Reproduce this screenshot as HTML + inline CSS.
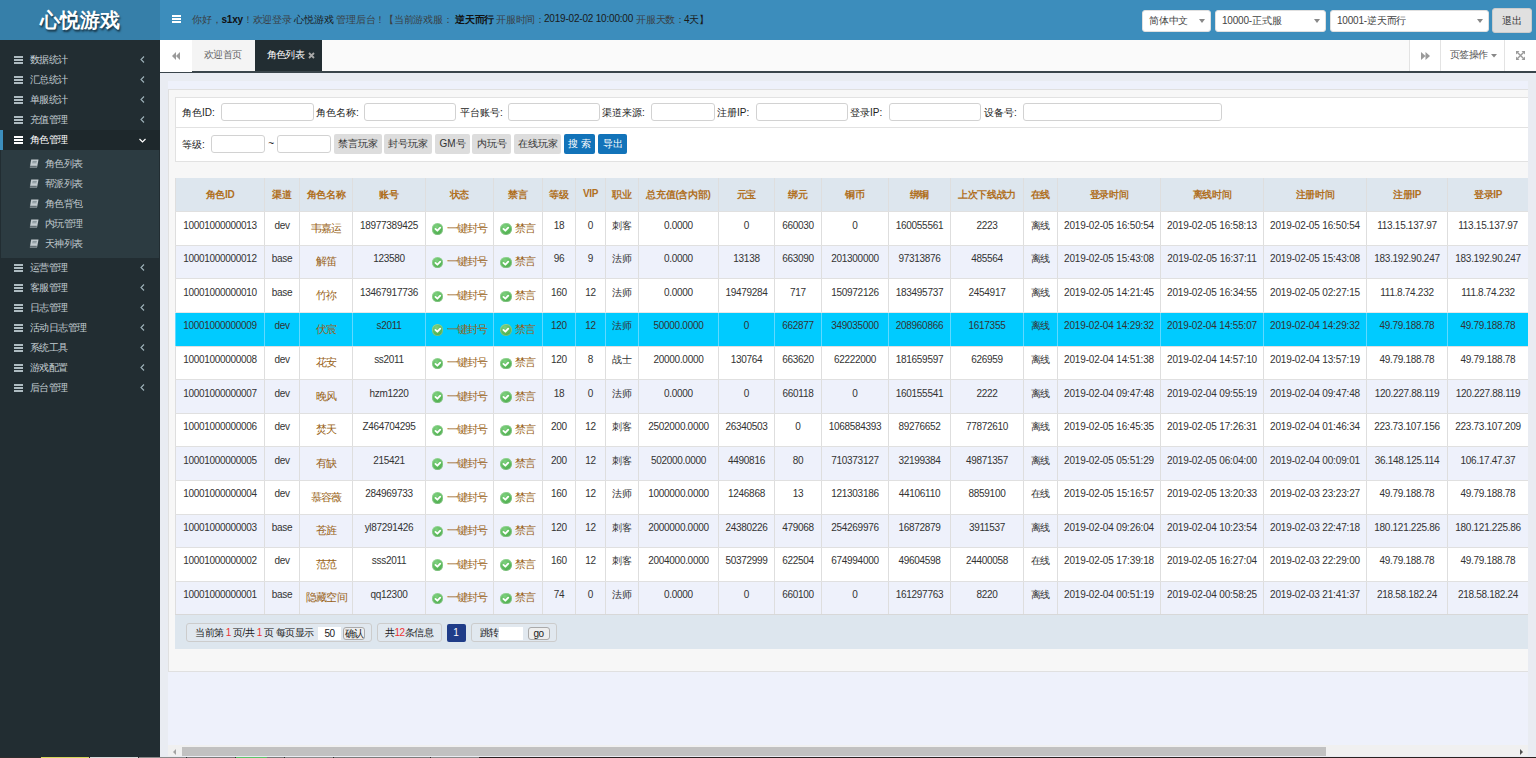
<!DOCTYPE html>
<html><head><meta charset="utf-8"><title>心悦游戏</title>
<style>
*{box-sizing:border-box;margin:0;padding:0}
html,body{width:1536px;height:758px;overflow:hidden;background:#e9ecf2;font-family:"Liberation Sans",sans-serif;font-size:10px;color:#333}
.abs{position:absolute}
#logo{left:0;top:0;width:160px;height:40px;background:#367fa9;color:#fff;font-size:20px;font-weight:bold;text-align:center;line-height:40px;text-shadow:1px 2px 2px rgba(0,0,0,.6)}
#hdr{left:160px;top:0;width:1376px;height:40px;background:#3c8dbc}
#hdr .ham2{position:absolute;left:12px;top:15px;width:9px;height:8px}
#hdr .ham2 b{display:block;height:2px;background:#fff;margin-bottom:1px}
#hdr .msg{position:absolute;left:32px;top:13px;color:#3a3f45;white-space:nowrap;font-size:10px;letter-spacing:-.2px}
#hdr .msg b{color:#111}
.sel{position:absolute;top:10px;height:22px;background:#fff;border-radius:3px;border:1px solid #e0e0e0;color:#444;font-size:10px;letter-spacing:-.2px;line-height:20px;padding-left:6px}
.sel:after{content:"";position:absolute;right:5px;top:8px;border-left:3px solid transparent;border-right:3px solid transparent;border-top:4px solid #888}
#logout{position:absolute;left:1332px;top:8px;width:40px;height:25px;background:#e0e0e0;border-radius:3px;border:1px solid #ccc;text-align:center;line-height:23px;color:#333}
#side{left:0;top:40px;width:160px;height:717px;background:#222d32}
.mi{position:absolute;left:0;width:160px;height:20px;color:#c4ced3;font-size:10.2px;letter-spacing:-.6px;line-height:20px}
.mi.act{background:#1e282c;color:#fff;border-left:3px solid #3c8dbc}
.ham{position:absolute;left:14px;top:6px;width:9px;height:8px}
.ham b{display:block;height:2px;background:#aebbc1;margin-bottom:1px}
.act .ham{left:11px}
.act .ham b{background:#fff}
.mt{position:absolute;left:30px;top:0}
.act .mt{left:27px}
.arr{position:absolute;left:140px;top:6px;width:5px;height:7px}
.act .arr{left:136px;top:8px;width:7px;height:5px}
.subm{position:absolute;left:1px;top:110px;width:158px;height:108px;background:#2c3b41}
.si{position:absolute;left:0;width:158px;height:20px;line-height:20px;color:#c0cace;font-size:10.2px;letter-spacing:-.6px}
.si span{position:absolute;left:44px}
.bk{position:absolute;left:28px;top:5px;width:10px;height:10px}
#tabs{left:160px;top:40px;width:1376px;height:33px;background:#fafafa;border-bottom:2px solid #3a454b}
.tb{position:absolute;top:0;height:31px;line-height:31px;text-align:center;color:#666;font-size:10.2px;letter-spacing:-.6px}
.tt{position:absolute;top:-1px;white-space:nowrap}
#content{left:168px;top:81px;width:1360px;height:675px;background:#eef1fb;overflow:hidden}
#panel{position:absolute;left:0;top:8px;width:1400px;height:583px;background:#f7f7f7;border:1px solid #e0e0e0}
#form{position:absolute;left:6px;top:7px;width:1400px;height:65px;background:#fff;border:1px solid #e2e2e2}
#form .r2{position:absolute;left:0;top:29px;width:100%;border-top:1px solid #e2e2e2}
.lb{position:absolute;color:#222;font-size:10px;white-space:nowrap}
.ip{position:absolute;height:18px;border:1px solid #d2d2d2;border-radius:3px;background:#fff}
.bt{position:absolute;height:20px;background:#ddd;border-radius:2px;color:#333;text-align:center;line-height:20px;font-size:10px}
.bt.bl{background:#1273b9;color:#fff}
#tbl{position:absolute;left:6px;top:87.8px;width:1400px;height:437px}
.thead{position:absolute;left:0;top:0;width:1400px;height:34px;background:#dde6ee}
.c{position:absolute;top:0;height:100%;border-left:1px solid #dedede;text-align:center;white-space:nowrap;padding-top:7.4px;font-size:10px;letter-spacing:-.3px;color:#333}
.c.h{color:#b0701f;font-weight:bold;padding-top:10.5px}
.row{position:absolute;left:0;width:1400px;height:33.58px;background:#fff;border-top:1px solid #e0e0e0}
.row.alt{background:#eef1fb}
.row.hl{background:#00cbff;border-top-color:#e8e8e8}
.row.hl .c{border-left-color:#5fd9ff}
.cj{position:relative;top:-1px}
.dt{letter-spacing:-.15px}
.nm{display:inline-block;color:#985f14;padding-top:2.2px;font-size:10.6px;letter-spacing:-.8px;margin-right:-.8px}
.st{display:inline-block;color:#985f14;padding-top:2.2px;font-size:10.6px;letter-spacing:-.8px}
.ck{display:inline-block;width:11.5px;height:11.5px;border-radius:50%;background:radial-gradient(circle at 40% 30%,#7fd07f 0,#5cba5c 50%,#3e9a3e 100%);box-shadow:inset 0 0 0 1px rgba(255,255,255,.25);vertical-align:-3px;margin-right:3.5px;position:relative}
.ck svg{position:absolute;left:0;top:0}
#pager{position:absolute;left:6px;top:524px;width:1400px;height:35px;background:#dde6ee;border-top:1px solid #d8d8d8;color:#222}
.pg{position:absolute;top:8px;height:19px;border:1px solid #ccc;border-radius:3px;background:#e1e8ef;line-height:17px;font-size:10px;letter-spacing:-.5px;white-space:nowrap}
.red{color:#e33}
#hs{left:168px;top:745px;width:1360px;height:11px;background:#f0f0f0}
#bot{left:0;top:757px;width:1536px;height:1px;background:#2a2a2a}
#bot i{position:absolute;top:0;height:1px}
</style></head><body>
<div id="logo" class="abs">心悦游戏</div>
<div id="hdr" class="abs">
  <i class="ham2"><b></b><b></b><b></b></i>
  <div class="msg"><span style="position:absolute;left:0">你好，<b>s1xy</b>！欢迎登录 <span style="color:#1a1a1a">心悦游戏</span> 管理后台！</span><span style="position:absolute;left:192px">【当前游戏服：</span><b style="position:absolute;left:263px">逆天而行</b><span style="position:absolute;left:304px">开服时间：</span><span style="position:absolute;left:352px;color:#1a1a1a">2019-02-02 10:00:00</span><span style="position:absolute;left:444px">开服天数：</span><span style="position:absolute;left:492px;color:#1a1a1a">4天】</span></div>
  <div class="sel" style="left:982px;width:69px">简体中文</div>
  <div class="sel" style="left:1055px;width:111px">10000-正式服</div>
  <div class="sel" style="left:1170px;width:159px">10001-逆天而行</div>
  <div id="logout">退出</div>
</div>
<div id="side" class="abs"><div class="mi" style="top:9.5px"><i class="ham"><b></b><b></b><b></b></i><span class="mt">数据统计</span><svg class="arr" viewBox="0 0 5 7"><path d="M4 0.5 L1 3.5 L4 6.5" fill="none" stroke="#9fb2ba" stroke-width="1.1"/></svg></div><div class="mi" style="top:29.5px"><i class="ham"><b></b><b></b><b></b></i><span class="mt">汇总统计</span><svg class="arr" viewBox="0 0 5 7"><path d="M4 0.5 L1 3.5 L4 6.5" fill="none" stroke="#9fb2ba" stroke-width="1.1"/></svg></div><div class="mi" style="top:49.5px"><i class="ham"><b></b><b></b><b></b></i><span class="mt">单服统计</span><svg class="arr" viewBox="0 0 5 7"><path d="M4 0.5 L1 3.5 L4 6.5" fill="none" stroke="#9fb2ba" stroke-width="1.1"/></svg></div><div class="mi" style="top:69.5px"><i class="ham"><b></b><b></b><b></b></i><span class="mt">充值管理</span><svg class="arr" viewBox="0 0 5 7"><path d="M4 0.5 L1 3.5 L4 6.5" fill="none" stroke="#9fb2ba" stroke-width="1.1"/></svg></div><div class="mi act" style="top:90.0px"><i class="ham"><b></b><b></b><b></b></i><span class="mt">角色管理</span><svg class="arr" viewBox="0 0 7 5"><path d="M0.5 1 L3.5 4 L6.5 1" fill="none" stroke="#fff" stroke-width="1.2"/></svg></div><div class="subm"><div class="si" style="top:4.0px"><svg class="bk" viewBox="0 0 10 10"><path d="M2.2 0.5 H9.5 L8 8.5 H0.8 Z" fill="#c4ccd0"/><path d="M1 7.3 H7.8" stroke="#2c3b41" stroke-width="0.8"/><path d="M3.5 2.4 H7.8 M3.2 3.8 H7.5" stroke="#6a7b82" stroke-width="0.7"/></svg><span>角色列表</span></div><div class="si" style="top:23.9px"><svg class="bk" viewBox="0 0 10 10"><path d="M2.2 0.5 H9.5 L8 8.5 H0.8 Z" fill="#c4ccd0"/><path d="M1 7.3 H7.8" stroke="#2c3b41" stroke-width="0.8"/><path d="M3.5 2.4 H7.8 M3.2 3.8 H7.5" stroke="#6a7b82" stroke-width="0.7"/></svg><span>帮派列表</span></div><div class="si" style="top:43.8px"><svg class="bk" viewBox="0 0 10 10"><path d="M2.2 0.5 H9.5 L8 8.5 H0.8 Z" fill="#c4ccd0"/><path d="M1 7.3 H7.8" stroke="#2c3b41" stroke-width="0.8"/><path d="M3.5 2.4 H7.8 M3.2 3.8 H7.5" stroke="#6a7b82" stroke-width="0.7"/></svg><span>角色背包</span></div><div class="si" style="top:63.7px"><svg class="bk" viewBox="0 0 10 10"><path d="M2.2 0.5 H9.5 L8 8.5 H0.8 Z" fill="#c4ccd0"/><path d="M1 7.3 H7.8" stroke="#2c3b41" stroke-width="0.8"/><path d="M3.5 2.4 H7.8 M3.2 3.8 H7.5" stroke="#6a7b82" stroke-width="0.7"/></svg><span>内玩管理</span></div><div class="si" style="top:83.6px"><svg class="bk" viewBox="0 0 10 10"><path d="M2.2 0.5 H9.5 L8 8.5 H0.8 Z" fill="#c4ccd0"/><path d="M1 7.3 H7.8" stroke="#2c3b41" stroke-width="0.8"/><path d="M3.5 2.4 H7.8 M3.2 3.8 H7.5" stroke="#6a7b82" stroke-width="0.7"/></svg><span>天神列表</span></div></div><div class="mi" style="top:217.5px"><i class="ham"><b></b><b></b><b></b></i><span class="mt">运营管理</span><svg class="arr" viewBox="0 0 5 7"><path d="M4 0.5 L1 3.5 L4 6.5" fill="none" stroke="#9fb2ba" stroke-width="1.1"/></svg></div><div class="mi" style="top:237.5px"><i class="ham"><b></b><b></b><b></b></i><span class="mt">客服管理</span><svg class="arr" viewBox="0 0 5 7"><path d="M4 0.5 L1 3.5 L4 6.5" fill="none" stroke="#9fb2ba" stroke-width="1.1"/></svg></div><div class="mi" style="top:257.5px"><i class="ham"><b></b><b></b><b></b></i><span class="mt">日志管理</span><svg class="arr" viewBox="0 0 5 7"><path d="M4 0.5 L1 3.5 L4 6.5" fill="none" stroke="#9fb2ba" stroke-width="1.1"/></svg></div><div class="mi" style="top:277.5px"><i class="ham"><b></b><b></b><b></b></i><span class="mt">活动日志管理</span><svg class="arr" viewBox="0 0 5 7"><path d="M4 0.5 L1 3.5 L4 6.5" fill="none" stroke="#9fb2ba" stroke-width="1.1"/></svg></div><div class="mi" style="top:297.5px"><i class="ham"><b></b><b></b><b></b></i><span class="mt">系统工具</span><svg class="arr" viewBox="0 0 5 7"><path d="M4 0.5 L1 3.5 L4 6.5" fill="none" stroke="#9fb2ba" stroke-width="1.1"/></svg></div><div class="mi" style="top:317.5px"><i class="ham"><b></b><b></b><b></b></i><span class="mt">游戏配置</span><svg class="arr" viewBox="0 0 5 7"><path d="M4 0.5 L1 3.5 L4 6.5" fill="none" stroke="#9fb2ba" stroke-width="1.1"/></svg></div><div class="mi" style="top:337.5px"><i class="ham"><b></b><b></b><b></b></i><span class="mt">后台管理</span><svg class="arr" viewBox="0 0 5 7"><path d="M4 0.5 L1 3.5 L4 6.5" fill="none" stroke="#9fb2ba" stroke-width="1.1"/></svg></div></div>
<div id="tabs" class="abs">
  <div class="tb" style="left:0;width:32px;height:32px;background:#fff"><svg style="position:absolute;left:12px;top:12px" width="8" height="8" viewBox="0 0 8 8"><path d="M0 4 L4 0 V8 Z M4 4 L8 0 V8 Z" fill="#9a9a9a"/></svg></div>
  <div class="tb" style="left:32px;width:63px;background:#f4f4f4"><span class="tt" style="left:12px">欢迎首页</span></div>
  <div class="tb" style="left:95px;width:67px;background:#222d32;color:#fff"><span class="tt" style="left:11.5px">角色列表</span><svg style="position:absolute;left:53px;top:12px" width="7" height="7" viewBox="0 0 7 7"><path d="M1 1 L6 6 M6 1 L1 6" stroke="#a8a8a8" stroke-width="1.8"/></svg></div>
  <div class="tb" style="left:1249px;width:32px;background:#fff;border-left:1px solid #e3e3e3"><svg style="position:absolute;left:11px;top:12px" width="9" height="8" viewBox="0 0 9 8"><path d="M0 0 L4.5 4 L0 8 Z M4.5 0 L9 4 L4.5 8 Z" fill="#9a9a9a"/></svg></div>
  <div class="tb" style="left:1280px;width:64px;background:#fff;border-left:1px solid #e3e3e3"><span class="tt" style="left:9px;color:#555">页签操作</span><svg style="position:absolute;left:50px;top:14px" width="6" height="4" viewBox="0 0 6 4"><path d="M0 0 H6 L3 3.5 Z" fill="#888"/></svg></div>
  <div class="tb" style="left:1344px;width:32px;background:#fff;border-left:1px solid #e3e3e3"><svg style="position:absolute;left:11px;top:11px" width="9" height="9" viewBox="0 0 9 9"><path d="M0 0 H3.5 L0 3.5 Z M9 0 V3.5 L5.5 0 Z M0 9 V5.5 L3.5 9 Z M9 9 H5.5 L9 5.5 Z" fill="#9a9a9a"/><path d="M1.5 1.5 L7.5 7.5 M7.5 1.5 L1.5 7.5" stroke="#9a9a9a" stroke-width="1.4"/></svg></div>
</div>
<div id="content" class="abs">
 <div id="panel">
  <div id="form">
   <div class="r2"></div>
   <div class="lb" style="left:6px;top:8px">角色ID:</div><div class="ip" style="left:45px;top:5px;width:93px"></div>
   <div class="lb" style="left:140px;top:8px">角色名称:</div><div class="ip" style="left:188px;top:5px;width:92px"></div>
   <div class="lb" style="left:284px;top:8px">平台账号:</div><div class="ip" style="left:332px;top:5px;width:92px"></div>
   <div class="lb" style="left:426px;top:8px">渠道来源:</div><div class="ip" style="left:475px;top:5px;width:64px"></div>
   <div class="lb" style="left:541px;top:8px">注册IP:</div><div class="ip" style="left:580px;top:5px;width:92px"></div>
   <div class="lb" style="left:674px;top:8px">登录IP:</div><div class="ip" style="left:713px;top:5px;width:92px"></div>
   <div class="lb" style="left:808px;top:8px">设备号:</div><div class="ip" style="left:847px;top:5px;width:199px"></div>
   <div class="lb" style="left:6px;top:40px">等级:</div><div class="ip" style="left:35px;top:37px;width:54px"></div>
   <div class="lb" style="left:92.2px;top:40px">~</div><div class="ip" style="left:101px;top:37px;width:54px"></div>
   <div class="bt" style="left:158px;top:36px;width:48px">禁言玩家</div>
   <div class="bt" style="left:208px;top:36px;width:48px">封号玩家</div>
   <div class="bt" style="left:259px;top:36px;width:35px">GM号</div>
   <div class="bt" style="left:296px;top:36px;width:39px">内玩号</div>
   <div class="bt" style="left:338px;top:36px;width:47px">在线玩家</div>
   <div class="bt bl" style="left:388px;top:36px;width:31px">搜 索</div>
   <div class="bt bl" style="left:422px;top:36px;width:29px">导出</div>
  </div>
  <div id="tbl">
   <div class="thead"><div class="c h" style="left:0px;width:89px">角色ID</div><div class="c h" style="left:89px;width:35px">渠道</div><div class="c h" style="left:124px;width:53px">角色名称</div><div class="c h" style="left:177px;width:73px">账号</div><div class="c h" style="left:250px;width:68px">状态</div><div class="c h" style="left:318px;width:49px">禁言</div><div class="c h" style="left:367px;width:33px">等级</div><div class="c h" style="left:400px;width:30px">VIP</div><div class="c h" style="left:430px;width:33px">职业</div><div class="c h" style="left:463px;width:80px">总充值(含内部)</div><div class="c h" style="left:543px;width:56px">元宝</div><div class="c h" style="left:599px;width:47px">绑元</div><div class="c h" style="left:646px;width:67px">铜币</div><div class="c h" style="left:713px;width:62px">绑铜</div><div class="c h" style="left:775px;width:73px">上次下线战力</div><div class="c h" style="left:848px;width:34px">在线</div><div class="c h" style="left:882px;width:103px">登录时间</div><div class="c h" style="left:985px;width:103px">离线时间</div><div class="c h" style="left:1088px;width:103px">注册时间</div><div class="c h" style="left:1191px;width:81px">注册IP</div><div class="c h" style="left:1272px;width:81px">登录IP</div></div>
   <div style="position:absolute;left:0;top:0;width:1400px"><div class="row" style="top:33.50px"><div class="c" style="left:0px;width:89px">10001000000013</div><div class="c" style="left:89px;width:35px">dev</div><div class="c" style="left:124px;width:53px"><span class="nm">韦嘉运</span></div><div class="c" style="left:177px;width:73px">18977389425</div><div class="c" style="left:250px;width:68px"><span class="st"><i class="ck"><svg width="11.5" height="11.5" viewBox="0 0 12 12"><path d="M3.6 6.2 L5.6 8 L8.6 4.8" fill="none" stroke="#fff" stroke-width="1.9" stroke-linecap="round" stroke-linejoin="round"/></svg></i>一键封号</span></div><div class="c" style="left:318px;width:49px"><span class="st"><i class="ck"><svg width="11.5" height="11.5" viewBox="0 0 12 12"><path d="M3.6 6.2 L5.6 8 L8.6 4.8" fill="none" stroke="#fff" stroke-width="1.9" stroke-linecap="round" stroke-linejoin="round"/></svg></i>禁言</span></div><div class="c" style="left:367px;width:33px">18</div><div class="c" style="left:400px;width:30px">0</div><div class="c" style="left:430px;width:33px"><span class="cj">刺客</span></div><div class="c" style="left:463px;width:80px">0.0000</div><div class="c" style="left:543px;width:56px">0</div><div class="c" style="left:599px;width:47px">660030</div><div class="c" style="left:646px;width:67px">0</div><div class="c" style="left:713px;width:62px">160055561</div><div class="c" style="left:775px;width:73px">2223</div><div class="c" style="left:848px;width:34px"><span class="cj">离线</span></div><div class="c" style="left:882px;width:103px"><span class="dt">2019-02-05 16:50:54</span></div><div class="c" style="left:985px;width:103px"><span class="dt">2019-02-05 16:58:13</span></div><div class="c" style="left:1088px;width:103px"><span class="dt">2019-02-05 16:50:54</span></div><div class="c" style="left:1191px;width:81px">113.15.137.97</div><div class="c" style="left:1272px;width:81px">113.15.137.97</div></div><div class="row alt" style="top:67.08px"><div class="c" style="left:0px;width:89px">10001000000012</div><div class="c" style="left:89px;width:35px">base</div><div class="c" style="left:124px;width:53px"><span class="nm">解笛</span></div><div class="c" style="left:177px;width:73px">123580</div><div class="c" style="left:250px;width:68px"><span class="st"><i class="ck"><svg width="11.5" height="11.5" viewBox="0 0 12 12"><path d="M3.6 6.2 L5.6 8 L8.6 4.8" fill="none" stroke="#fff" stroke-width="1.9" stroke-linecap="round" stroke-linejoin="round"/></svg></i>一键封号</span></div><div class="c" style="left:318px;width:49px"><span class="st"><i class="ck"><svg width="11.5" height="11.5" viewBox="0 0 12 12"><path d="M3.6 6.2 L5.6 8 L8.6 4.8" fill="none" stroke="#fff" stroke-width="1.9" stroke-linecap="round" stroke-linejoin="round"/></svg></i>禁言</span></div><div class="c" style="left:367px;width:33px">96</div><div class="c" style="left:400px;width:30px">9</div><div class="c" style="left:430px;width:33px"><span class="cj">法师</span></div><div class="c" style="left:463px;width:80px">0.0000</div><div class="c" style="left:543px;width:56px">13138</div><div class="c" style="left:599px;width:47px">663090</div><div class="c" style="left:646px;width:67px">201300000</div><div class="c" style="left:713px;width:62px">97313876</div><div class="c" style="left:775px;width:73px">485564</div><div class="c" style="left:848px;width:34px"><span class="cj">离线</span></div><div class="c" style="left:882px;width:103px"><span class="dt">2019-02-05 15:43:08</span></div><div class="c" style="left:985px;width:103px"><span class="dt">2019-02-05 16:37:11</span></div><div class="c" style="left:1088px;width:103px"><span class="dt">2019-02-05 15:43:08</span></div><div class="c" style="left:1191px;width:81px">183.192.90.247</div><div class="c" style="left:1272px;width:81px">183.192.90.247</div></div><div class="row" style="top:100.66px"><div class="c" style="left:0px;width:89px">10001000000010</div><div class="c" style="left:89px;width:35px">base</div><div class="c" style="left:124px;width:53px"><span class="nm">竹祢</span></div><div class="c" style="left:177px;width:73px">13467917736</div><div class="c" style="left:250px;width:68px"><span class="st"><i class="ck"><svg width="11.5" height="11.5" viewBox="0 0 12 12"><path d="M3.6 6.2 L5.6 8 L8.6 4.8" fill="none" stroke="#fff" stroke-width="1.9" stroke-linecap="round" stroke-linejoin="round"/></svg></i>一键封号</span></div><div class="c" style="left:318px;width:49px"><span class="st"><i class="ck"><svg width="11.5" height="11.5" viewBox="0 0 12 12"><path d="M3.6 6.2 L5.6 8 L8.6 4.8" fill="none" stroke="#fff" stroke-width="1.9" stroke-linecap="round" stroke-linejoin="round"/></svg></i>禁言</span></div><div class="c" style="left:367px;width:33px">160</div><div class="c" style="left:400px;width:30px">12</div><div class="c" style="left:430px;width:33px"><span class="cj">法师</span></div><div class="c" style="left:463px;width:80px">0.0000</div><div class="c" style="left:543px;width:56px">19479284</div><div class="c" style="left:599px;width:47px">717</div><div class="c" style="left:646px;width:67px">150972126</div><div class="c" style="left:713px;width:62px">183495737</div><div class="c" style="left:775px;width:73px">2454917</div><div class="c" style="left:848px;width:34px"><span class="cj">离线</span></div><div class="c" style="left:882px;width:103px"><span class="dt">2019-02-05 14:21:45</span></div><div class="c" style="left:985px;width:103px"><span class="dt">2019-02-05 16:34:55</span></div><div class="c" style="left:1088px;width:103px"><span class="dt">2019-02-05 02:27:15</span></div><div class="c" style="left:1191px;width:81px">111.8.74.232</div><div class="c" style="left:1272px;width:81px">111.8.74.232</div></div><div class="row hl" style="top:134.24px"><div class="c" style="left:0px;width:89px">10001000000009</div><div class="c" style="left:89px;width:35px">dev</div><div class="c" style="left:124px;width:53px"><span class="nm">伏宸</span></div><div class="c" style="left:177px;width:73px">s2011</div><div class="c" style="left:250px;width:68px"><span class="st"><i class="ck"><svg width="11.5" height="11.5" viewBox="0 0 12 12"><path d="M3.6 6.2 L5.6 8 L8.6 4.8" fill="none" stroke="#fff" stroke-width="1.9" stroke-linecap="round" stroke-linejoin="round"/></svg></i>一键封号</span></div><div class="c" style="left:318px;width:49px"><span class="st"><i class="ck"><svg width="11.5" height="11.5" viewBox="0 0 12 12"><path d="M3.6 6.2 L5.6 8 L8.6 4.8" fill="none" stroke="#fff" stroke-width="1.9" stroke-linecap="round" stroke-linejoin="round"/></svg></i>禁言</span></div><div class="c" style="left:367px;width:33px">120</div><div class="c" style="left:400px;width:30px">12</div><div class="c" style="left:430px;width:33px"><span class="cj">法师</span></div><div class="c" style="left:463px;width:80px">50000.0000</div><div class="c" style="left:543px;width:56px">0</div><div class="c" style="left:599px;width:47px">662877</div><div class="c" style="left:646px;width:67px">349035000</div><div class="c" style="left:713px;width:62px">208960866</div><div class="c" style="left:775px;width:73px">1617355</div><div class="c" style="left:848px;width:34px"><span class="cj">离线</span></div><div class="c" style="left:882px;width:103px"><span class="dt">2019-02-04 14:29:32</span></div><div class="c" style="left:985px;width:103px"><span class="dt">2019-02-04 14:55:07</span></div><div class="c" style="left:1088px;width:103px"><span class="dt">2019-02-04 14:29:32</span></div><div class="c" style="left:1191px;width:81px">49.79.188.78</div><div class="c" style="left:1272px;width:81px">49.79.188.78</div></div><div class="row" style="top:167.82px"><div class="c" style="left:0px;width:89px">10001000000008</div><div class="c" style="left:89px;width:35px">dev</div><div class="c" style="left:124px;width:53px"><span class="nm">花安</span></div><div class="c" style="left:177px;width:73px">ss2011</div><div class="c" style="left:250px;width:68px"><span class="st"><i class="ck"><svg width="11.5" height="11.5" viewBox="0 0 12 12"><path d="M3.6 6.2 L5.6 8 L8.6 4.8" fill="none" stroke="#fff" stroke-width="1.9" stroke-linecap="round" stroke-linejoin="round"/></svg></i>一键封号</span></div><div class="c" style="left:318px;width:49px"><span class="st"><i class="ck"><svg width="11.5" height="11.5" viewBox="0 0 12 12"><path d="M3.6 6.2 L5.6 8 L8.6 4.8" fill="none" stroke="#fff" stroke-width="1.9" stroke-linecap="round" stroke-linejoin="round"/></svg></i>禁言</span></div><div class="c" style="left:367px;width:33px">120</div><div class="c" style="left:400px;width:30px">8</div><div class="c" style="left:430px;width:33px"><span class="cj">战士</span></div><div class="c" style="left:463px;width:80px">20000.0000</div><div class="c" style="left:543px;width:56px">130764</div><div class="c" style="left:599px;width:47px">663620</div><div class="c" style="left:646px;width:67px">62222000</div><div class="c" style="left:713px;width:62px">181659597</div><div class="c" style="left:775px;width:73px">626959</div><div class="c" style="left:848px;width:34px"><span class="cj">离线</span></div><div class="c" style="left:882px;width:103px"><span class="dt">2019-02-04 14:51:38</span></div><div class="c" style="left:985px;width:103px"><span class="dt">2019-02-04 14:57:10</span></div><div class="c" style="left:1088px;width:103px"><span class="dt">2019-02-04 13:57:19</span></div><div class="c" style="left:1191px;width:81px">49.79.188.78</div><div class="c" style="left:1272px;width:81px">49.79.188.78</div></div><div class="row alt" style="top:201.40px"><div class="c" style="left:0px;width:89px">10001000000007</div><div class="c" style="left:89px;width:35px">dev</div><div class="c" style="left:124px;width:53px"><span class="nm">晚风</span></div><div class="c" style="left:177px;width:73px">hzm1220</div><div class="c" style="left:250px;width:68px"><span class="st"><i class="ck"><svg width="11.5" height="11.5" viewBox="0 0 12 12"><path d="M3.6 6.2 L5.6 8 L8.6 4.8" fill="none" stroke="#fff" stroke-width="1.9" stroke-linecap="round" stroke-linejoin="round"/></svg></i>一键封号</span></div><div class="c" style="left:318px;width:49px"><span class="st"><i class="ck"><svg width="11.5" height="11.5" viewBox="0 0 12 12"><path d="M3.6 6.2 L5.6 8 L8.6 4.8" fill="none" stroke="#fff" stroke-width="1.9" stroke-linecap="round" stroke-linejoin="round"/></svg></i>禁言</span></div><div class="c" style="left:367px;width:33px">18</div><div class="c" style="left:400px;width:30px">0</div><div class="c" style="left:430px;width:33px"><span class="cj">法师</span></div><div class="c" style="left:463px;width:80px">0.0000</div><div class="c" style="left:543px;width:56px">0</div><div class="c" style="left:599px;width:47px">660118</div><div class="c" style="left:646px;width:67px">0</div><div class="c" style="left:713px;width:62px">160155541</div><div class="c" style="left:775px;width:73px">2222</div><div class="c" style="left:848px;width:34px"><span class="cj">离线</span></div><div class="c" style="left:882px;width:103px"><span class="dt">2019-02-04 09:47:48</span></div><div class="c" style="left:985px;width:103px"><span class="dt">2019-02-04 09:55:19</span></div><div class="c" style="left:1088px;width:103px"><span class="dt">2019-02-04 09:47:48</span></div><div class="c" style="left:1191px;width:81px">120.227.88.119</div><div class="c" style="left:1272px;width:81px">120.227.88.119</div></div><div class="row" style="top:234.98px"><div class="c" style="left:0px;width:89px">10001000000006</div><div class="c" style="left:89px;width:35px">dev</div><div class="c" style="left:124px;width:53px"><span class="nm">焚天</span></div><div class="c" style="left:177px;width:73px">Z464704295</div><div class="c" style="left:250px;width:68px"><span class="st"><i class="ck"><svg width="11.5" height="11.5" viewBox="0 0 12 12"><path d="M3.6 6.2 L5.6 8 L8.6 4.8" fill="none" stroke="#fff" stroke-width="1.9" stroke-linecap="round" stroke-linejoin="round"/></svg></i>一键封号</span></div><div class="c" style="left:318px;width:49px"><span class="st"><i class="ck"><svg width="11.5" height="11.5" viewBox="0 0 12 12"><path d="M3.6 6.2 L5.6 8 L8.6 4.8" fill="none" stroke="#fff" stroke-width="1.9" stroke-linecap="round" stroke-linejoin="round"/></svg></i>禁言</span></div><div class="c" style="left:367px;width:33px">200</div><div class="c" style="left:400px;width:30px">12</div><div class="c" style="left:430px;width:33px"><span class="cj">刺客</span></div><div class="c" style="left:463px;width:80px">2502000.0000</div><div class="c" style="left:543px;width:56px">26340503</div><div class="c" style="left:599px;width:47px">0</div><div class="c" style="left:646px;width:67px">1068584393</div><div class="c" style="left:713px;width:62px">89276652</div><div class="c" style="left:775px;width:73px">77872610</div><div class="c" style="left:848px;width:34px"><span class="cj">离线</span></div><div class="c" style="left:882px;width:103px"><span class="dt">2019-02-05 16:45:35</span></div><div class="c" style="left:985px;width:103px"><span class="dt">2019-02-05 17:26:31</span></div><div class="c" style="left:1088px;width:103px"><span class="dt">2019-02-04 01:46:34</span></div><div class="c" style="left:1191px;width:81px">223.73.107.156</div><div class="c" style="left:1272px;width:81px">223.73.107.209</div></div><div class="row alt" style="top:268.56px"><div class="c" style="left:0px;width:89px">10001000000005</div><div class="c" style="left:89px;width:35px">dev</div><div class="c" style="left:124px;width:53px"><span class="nm">有缺</span></div><div class="c" style="left:177px;width:73px">215421</div><div class="c" style="left:250px;width:68px"><span class="st"><i class="ck"><svg width="11.5" height="11.5" viewBox="0 0 12 12"><path d="M3.6 6.2 L5.6 8 L8.6 4.8" fill="none" stroke="#fff" stroke-width="1.9" stroke-linecap="round" stroke-linejoin="round"/></svg></i>一键封号</span></div><div class="c" style="left:318px;width:49px"><span class="st"><i class="ck"><svg width="11.5" height="11.5" viewBox="0 0 12 12"><path d="M3.6 6.2 L5.6 8 L8.6 4.8" fill="none" stroke="#fff" stroke-width="1.9" stroke-linecap="round" stroke-linejoin="round"/></svg></i>禁言</span></div><div class="c" style="left:367px;width:33px">200</div><div class="c" style="left:400px;width:30px">12</div><div class="c" style="left:430px;width:33px"><span class="cj">刺客</span></div><div class="c" style="left:463px;width:80px">502000.0000</div><div class="c" style="left:543px;width:56px">4490816</div><div class="c" style="left:599px;width:47px">80</div><div class="c" style="left:646px;width:67px">710373127</div><div class="c" style="left:713px;width:62px">32199384</div><div class="c" style="left:775px;width:73px">49871357</div><div class="c" style="left:848px;width:34px"><span class="cj">离线</span></div><div class="c" style="left:882px;width:103px"><span class="dt">2019-02-05 05:51:29</span></div><div class="c" style="left:985px;width:103px"><span class="dt">2019-02-05 06:04:00</span></div><div class="c" style="left:1088px;width:103px"><span class="dt">2019-02-04 00:09:01</span></div><div class="c" style="left:1191px;width:81px">36.148.125.114</div><div class="c" style="left:1272px;width:81px">106.17.47.37</div></div><div class="row" style="top:302.14px"><div class="c" style="left:0px;width:89px">10001000000004</div><div class="c" style="left:89px;width:35px">dev</div><div class="c" style="left:124px;width:53px"><span class="nm">慕容薇</span></div><div class="c" style="left:177px;width:73px">284969733</div><div class="c" style="left:250px;width:68px"><span class="st"><i class="ck"><svg width="11.5" height="11.5" viewBox="0 0 12 12"><path d="M3.6 6.2 L5.6 8 L8.6 4.8" fill="none" stroke="#fff" stroke-width="1.9" stroke-linecap="round" stroke-linejoin="round"/></svg></i>一键封号</span></div><div class="c" style="left:318px;width:49px"><span class="st"><i class="ck"><svg width="11.5" height="11.5" viewBox="0 0 12 12"><path d="M3.6 6.2 L5.6 8 L8.6 4.8" fill="none" stroke="#fff" stroke-width="1.9" stroke-linecap="round" stroke-linejoin="round"/></svg></i>禁言</span></div><div class="c" style="left:367px;width:33px">160</div><div class="c" style="left:400px;width:30px">12</div><div class="c" style="left:430px;width:33px"><span class="cj">法师</span></div><div class="c" style="left:463px;width:80px">1000000.0000</div><div class="c" style="left:543px;width:56px">1246868</div><div class="c" style="left:599px;width:47px">13</div><div class="c" style="left:646px;width:67px">121303186</div><div class="c" style="left:713px;width:62px">44106110</div><div class="c" style="left:775px;width:73px">8859100</div><div class="c" style="left:848px;width:34px"><span class="cj">在线</span></div><div class="c" style="left:882px;width:103px"><span class="dt">2019-02-05 15:16:57</span></div><div class="c" style="left:985px;width:103px"><span class="dt">2019-02-05 13:20:33</span></div><div class="c" style="left:1088px;width:103px"><span class="dt">2019-02-03 23:23:27</span></div><div class="c" style="left:1191px;width:81px">49.79.188.78</div><div class="c" style="left:1272px;width:81px">49.79.188.78</div></div><div class="row alt" style="top:335.72px"><div class="c" style="left:0px;width:89px">10001000000003</div><div class="c" style="left:89px;width:35px">base</div><div class="c" style="left:124px;width:53px"><span class="nm">苍旌</span></div><div class="c" style="left:177px;width:73px">yl87291426</div><div class="c" style="left:250px;width:68px"><span class="st"><i class="ck"><svg width="11.5" height="11.5" viewBox="0 0 12 12"><path d="M3.6 6.2 L5.6 8 L8.6 4.8" fill="none" stroke="#fff" stroke-width="1.9" stroke-linecap="round" stroke-linejoin="round"/></svg></i>一键封号</span></div><div class="c" style="left:318px;width:49px"><span class="st"><i class="ck"><svg width="11.5" height="11.5" viewBox="0 0 12 12"><path d="M3.6 6.2 L5.6 8 L8.6 4.8" fill="none" stroke="#fff" stroke-width="1.9" stroke-linecap="round" stroke-linejoin="round"/></svg></i>禁言</span></div><div class="c" style="left:367px;width:33px">120</div><div class="c" style="left:400px;width:30px">12</div><div class="c" style="left:430px;width:33px"><span class="cj">刺客</span></div><div class="c" style="left:463px;width:80px">2000000.0000</div><div class="c" style="left:543px;width:56px">24380226</div><div class="c" style="left:599px;width:47px">479068</div><div class="c" style="left:646px;width:67px">254269976</div><div class="c" style="left:713px;width:62px">16872879</div><div class="c" style="left:775px;width:73px">3911537</div><div class="c" style="left:848px;width:34px"><span class="cj">离线</span></div><div class="c" style="left:882px;width:103px"><span class="dt">2019-02-04 09:26:04</span></div><div class="c" style="left:985px;width:103px"><span class="dt">2019-02-04 10:23:54</span></div><div class="c" style="left:1088px;width:103px"><span class="dt">2019-02-03 22:47:18</span></div><div class="c" style="left:1191px;width:81px">180.121.225.86</div><div class="c" style="left:1272px;width:81px">180.121.225.86</div></div><div class="row" style="top:369.30px"><div class="c" style="left:0px;width:89px">10001000000002</div><div class="c" style="left:89px;width:35px">dev</div><div class="c" style="left:124px;width:53px"><span class="nm">范范</span></div><div class="c" style="left:177px;width:73px">sss2011</div><div class="c" style="left:250px;width:68px"><span class="st"><i class="ck"><svg width="11.5" height="11.5" viewBox="0 0 12 12"><path d="M3.6 6.2 L5.6 8 L8.6 4.8" fill="none" stroke="#fff" stroke-width="1.9" stroke-linecap="round" stroke-linejoin="round"/></svg></i>一键封号</span></div><div class="c" style="left:318px;width:49px"><span class="st"><i class="ck"><svg width="11.5" height="11.5" viewBox="0 0 12 12"><path d="M3.6 6.2 L5.6 8 L8.6 4.8" fill="none" stroke="#fff" stroke-width="1.9" stroke-linecap="round" stroke-linejoin="round"/></svg></i>禁言</span></div><div class="c" style="left:367px;width:33px">160</div><div class="c" style="left:400px;width:30px">12</div><div class="c" style="left:430px;width:33px"><span class="cj">刺客</span></div><div class="c" style="left:463px;width:80px">2004000.0000</div><div class="c" style="left:543px;width:56px">50372999</div><div class="c" style="left:599px;width:47px">622504</div><div class="c" style="left:646px;width:67px">674994000</div><div class="c" style="left:713px;width:62px">49604598</div><div class="c" style="left:775px;width:73px">24400058</div><div class="c" style="left:848px;width:34px"><span class="cj">在线</span></div><div class="c" style="left:882px;width:103px"><span class="dt">2019-02-05 17:39:18</span></div><div class="c" style="left:985px;width:103px"><span class="dt">2019-02-05 16:27:04</span></div><div class="c" style="left:1088px;width:103px"><span class="dt">2019-02-03 22:29:00</span></div><div class="c" style="left:1191px;width:81px">49.79.188.78</div><div class="c" style="left:1272px;width:81px">49.79.188.78</div></div><div class="row alt" style="top:402.88px"><div class="c" style="left:0px;width:89px">10001000000001</div><div class="c" style="left:89px;width:35px">base</div><div class="c" style="left:124px;width:53px"><span class="nm">隐藏空间</span></div><div class="c" style="left:177px;width:73px">qq12300</div><div class="c" style="left:250px;width:68px"><span class="st"><i class="ck"><svg width="11.5" height="11.5" viewBox="0 0 12 12"><path d="M3.6 6.2 L5.6 8 L8.6 4.8" fill="none" stroke="#fff" stroke-width="1.9" stroke-linecap="round" stroke-linejoin="round"/></svg></i>一键封号</span></div><div class="c" style="left:318px;width:49px"><span class="st"><i class="ck"><svg width="11.5" height="11.5" viewBox="0 0 12 12"><path d="M3.6 6.2 L5.6 8 L8.6 4.8" fill="none" stroke="#fff" stroke-width="1.9" stroke-linecap="round" stroke-linejoin="round"/></svg></i>禁言</span></div><div class="c" style="left:367px;width:33px">74</div><div class="c" style="left:400px;width:30px">0</div><div class="c" style="left:430px;width:33px"><span class="cj">法师</span></div><div class="c" style="left:463px;width:80px">0.0000</div><div class="c" style="left:543px;width:56px">0</div><div class="c" style="left:599px;width:47px">660100</div><div class="c" style="left:646px;width:67px">0</div><div class="c" style="left:713px;width:62px">161297763</div><div class="c" style="left:775px;width:73px">8220</div><div class="c" style="left:848px;width:34px"><span class="cj">离线</span></div><div class="c" style="left:882px;width:103px"><span class="dt">2019-02-04 00:51:19</span></div><div class="c" style="left:985px;width:103px"><span class="dt">2019-02-04 00:58:25</span></div><div class="c" style="left:1088px;width:103px"><span class="dt">2019-02-03 21:41:37</span></div><div class="c" style="left:1191px;width:81px">218.58.182.24</div><div class="c" style="left:1272px;width:81px">218.58.182.24</div></div></div>
  </div>
  <div id="pager">
   <div class="pg" style="left:11px;width:186px"><span style="position:absolute;left:8px;top:0">当前第 <span class="red">1</span> 页/共 <span class="red">1</span> 页 每页显示</span><i style="position:absolute;left:131px;top:3px;width:23px;height:13px;background:#fff;font-style:normal;text-align:center;line-height:13px">50</i><i style="position:absolute;left:156px;top:3px;width:22px;height:13px;border:1px solid #aaa;border-radius:3px;background:#eee;font-style:normal;text-align:center;line-height:11px">确认</i></div>
   <div class="pg" style="left:201.5px;width:65px;text-align:center">共<span class="red">12</span>条信息</div>
   <div style="position:absolute;left:271.5px;top:8.5px;width:19px;height:18px;background:#1f3c88;border-radius:2px;color:#fff;text-align:center;line-height:18px">1</div>
   <div class="pg" style="left:295.5px;width:86px"><span style="position:absolute;left:8px;top:0">跳转</span><i style="position:absolute;left:27px;top:3px;width:24px;height:13px;background:#fff"></i><i style="position:absolute;left:56px;top:3px;width:22px;height:13px;border:1px solid #aaa;border-radius:3px;background:#eee;font-style:normal;text-align:center;line-height:11px">go</i></div>
  </div>
 </div>
</div>
<div id="hs" class="abs"><i style="position:absolute;left:5px;top:4px;border-top:3px solid transparent;border-bottom:3px solid transparent;border-right:3px solid #a3a3a3"></i><i style="position:absolute;left:13.6px;top:2px;width:1144px;height:9px;background:#c1c1c1"></i><i style="position:absolute;left:1352px;top:4px;border-top:3px solid transparent;border-bottom:3px solid transparent;border-left:3px solid #505050"></i></div>
<div id="bot" class="abs"><i style="left:0;width:41px;background:#2e2e2e"></i><i style="left:41px;width:48px;background:#d6d65a"></i><i style="left:90px;width:48px;background:#d8d8d8"></i><i style="left:139px;width:47px;background:#8a8a8a"></i><i style="left:187px;width:48px;background:#7a7a7a"></i><i style="left:236px;width:31px;background:#5bc46a"></i><i style="left:267px;width:17px;background:#7a7a7a"></i><i style="left:285px;width:48px;background:#8a8a8a"></i><i style="left:334px;width:50px;background:#7a7a7a"></i><i style="left:384px;width:46px;background:#7a7a7a"></i><i style="left:431px;width:48px;background:#8a8a8a"></i><i style="left:479px;width:1057px;background:#2a2020"></i></div>
</body></html>
